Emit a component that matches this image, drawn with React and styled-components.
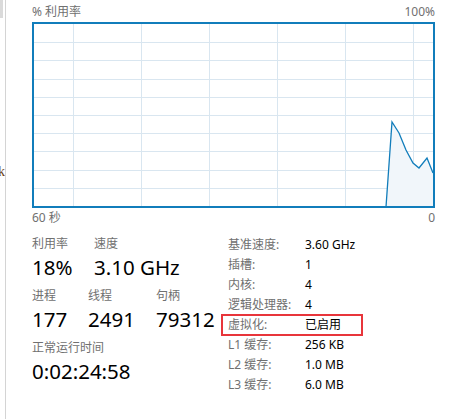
import styled, { createGlobalStyle } from "styled-components";

const GlobalStyle = createGlobalStyle`
  html, body {
    margin: 0;
    padding: 0;
    background: #ffffff;
  }
  body {
    font-family: "Noto Sans", "Noto Sans CJK SC", sans-serif;
  }
`;

const Page = styled.div`
  display: flex;
  width: 449px;
  height: 419px;
  overflow: hidden;
`;

const Edge = styled.div`
  width: 5px;
  flex: none;
  border-right: 1px solid #d4d4d4;
  display: flex;
  flex-direction: column;
  overflow: hidden;
`;

const ScrollThumb = styled.div`
  width: 3px;
  height: 18px;
  background: #dadada;
`;

const CutText = styled.div`
  margin-top: 146px;
  width: 5px;
  overflow: hidden;
  direction: rtl;
  font-family: "Liberation Serif", serif;
  font-size: 14px;
  line-height: 16px;
  color: #6b3d12;
`;

const Main = styled.div`
  padding-left: 26px;
  width: 403px;
`;

const AxisRow = styled.div`
  display: flex;
  justify-content: space-between;
  align-items: center;
  height: ${(p) => p.h}px;
  font-size: 12px;
  color: #707070;
`;

const Chart = styled.div`
  width: 399px;
  height: 182px;
  border: 2px solid #117dbb;
  svg {
    display: block;
  }
`;

const Stats = styled.div`
  display: flex;
  padding-top: 10px;
`;

const LeftCol = styled.div`
  width: 196px;
  display: flex;
  flex-direction: column;
  gap: 8px;
`;

const Group = styled.div`
  display: flex;
`;

const Stat = styled.div`
  width: ${(p) => (p.w ? `${p.w}px` : "auto")};
  display: flex;
  flex-direction: column;
  gap: 2px;
`;

const StatLabel = styled.div`
  font-size: 12px;
  line-height: 16px;
  color: #707070;
`;

const StatValue = styled.div`
  font-size: 20.5px;
  line-height: 26px;
  color: #000;
  white-space: nowrap;
`;

const RightCol = styled.div`
  display: flex;
  flex-direction: column;
  margin-top: -2px;
`;

const InfoRow = styled.div`
  position: relative;
  display: flex;
  align-items: center;
  height: 20px;
  font-size: 12px;
  &::after {
    content: "";
    display: ${(p) => (p.highlight ? "block" : "none")};
    position: absolute;
    left: -7px;
    top: 0;
    width: 142px;
    height: 22px;
    border: 2px solid #e8353b;
    box-sizing: border-box;
  }
`;

const InfoLabel = styled.span`
  width: 77px;
  color: #707070;
`;

const InfoValue = styled.span`
  color: #000;
`;

const gridX = [39, 107, 175, 243, 311, 379];
const gridY = [18, 36, 55, 73, 91, 109, 127, 146, 164];
const points = [
  [352, 183],
  [358, 98],
  [365, 109],
  [372, 126],
  [379, 139],
  [385, 144],
  [393, 134],
  [399, 149],
];

function CpuChart() {
  const line = points.map((p) => p.join(",")).join(" ");
  const area = `${line} 399,183`;
  return (
    <Chart>
      <svg width="399" height="182" viewBox="0 0 399 182">
        {gridX.map((x) => (
          <line key={`x${x}`} x1={x + 0.5} y1="0" x2={x + 0.5} y2="182" stroke="#d9e6f0" strokeWidth="1" />
        ))}
        {gridY.map((y) => (
          <line key={`y${y}`} x1="0" y1={y + 0.5} x2="399" y2={y + 0.5} stroke="#d9e6f0" strokeWidth="1" />
        ))}
        <polygon points={area} fill="#f1f6fa" />
        <polyline points={line} fill="none" stroke="#117dbb" strokeWidth="1.3" />
      </svg>
    </Chart>
  );
}

const info = [
  ["基准速度:", "3.60 GHz"],
  ["插槽:", "1"],
  ["内核:", "4"],
  ["逻辑处理器:", "4"],
  ["虚拟化:", "已启用", true],
  ["L1 缓存:", "256 KB"],
  ["L2 缓存:", "1.0 MB"],
  ["L3 缓存:", "6.0 MB"],
];

export default function App() {
  return (
    <>
      <GlobalStyle />
      <Page>
        <Edge>
          <ScrollThumb />
          <CutText>lk</CutText>
        </Edge>
        <Main>
          <AxisRow h={22}>
            <span>% 利用率</span>
            <span>100%</span>
          </AxisRow>
          <CpuChart />
          <AxisRow h={18}>
            <span>60 秒</span>
            <span>0</span>
          </AxisRow>
          <Stats>
            <LeftCol>
              <Group>
                <Stat w={62}>
                  <StatLabel>利用率</StatLabel>
                  <StatValue>18%</StatValue>
                </Stat>
                <Stat>
                  <StatLabel>速度</StatLabel>
                  <StatValue>3.10 GHz</StatValue>
                </Stat>
              </Group>
              <Group>
                <Stat w={56}>
                  <StatLabel>进程</StatLabel>
                  <StatValue>177</StatValue>
                </Stat>
                <Stat w={68}>
                  <StatLabel>线程</StatLabel>
                  <StatValue>2491</StatValue>
                </Stat>
                <Stat>
                  <StatLabel>句柄</StatLabel>
                  <StatValue>79312</StatValue>
                </Stat>
              </Group>
              <Group>
                <Stat>
                  <StatLabel>正常运行时间</StatLabel>
                  <StatValue>0:02:24:58</StatValue>
                </Stat>
              </Group>
            </LeftCol>
            <RightCol>
              {info.map(([label, value, hl]) => (
                <InfoRow key={label} highlight={hl}>
                  <InfoLabel>{label}</InfoLabel>
                  <InfoValue>{value}</InfoValue>
                </InfoRow>
              ))}
            </RightCol>
          </Stats>
        </Main>
      </Page>
    </>
  );
}
